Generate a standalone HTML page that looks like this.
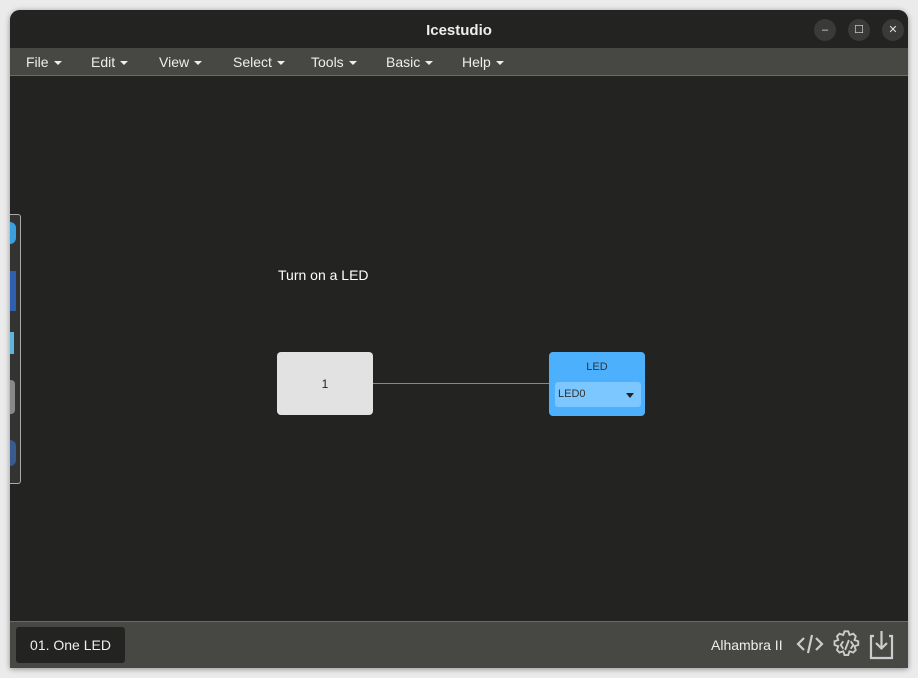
<!DOCTYPE html>
<html><head><meta charset="utf-8"><style>
*{margin:0;padding:0;box-sizing:border-box}
body{width:918px;height:678px;background:#ebebeb;position:relative;overflow:hidden;font-family:"Liberation Sans",sans-serif}
.win{position:absolute;left:10px;top:10px;width:898px;height:658px;background:#232321;border-radius:10px 10px 0 0;overflow:hidden;box-shadow:0 1px 6px rgba(0,0,0,.4)}
.title{height:38px;background:#232321;color:#eee;font-weight:bold;font-size:15px;text-align:center;line-height:42px}
.btn{position:absolute;top:9px;width:22px;height:22px;border-radius:50%;background:#3a3a38;color:#ddd;font-size:11px;text-align:center;line-height:22px}
.menu{position:absolute;top:38px;left:0;right:0;height:28px;background:#474743;border-bottom:1px solid #6a6a66;color:#eee;font-size:14px}
.menu span{position:absolute;top:6px}
.menu span:after{content:"";display:inline-block;margin-left:5px;vertical-align:middle;border-left:4px solid transparent;border-right:4px solid transparent;border-top:4px solid #eee}
.bottom{position:absolute;left:0;right:0;top:611px;height:47px;background:#474743;border-top:1px solid #6a6a66}
</style></head><body>
<div class="win">
<div class="title">Icestudio</div>
<div class="btn" style="left:804px">–</div>
<div class="btn" style="left:838px">☐</div>
<div class="btn" style="left:872px">✕</div>
<div class="menu">
<span style="left:16px">File</span><span style="left:81px">Edit</span><span style="left:149px">View</span><span style="left:223px">Select</span><span style="left:301px">Tools</span><span style="left:376px">Basic</span><span style="left:452px">Help</span>
</div>
<div style="position:absolute;left:-2px;top:204px;width:13px;height:270px;border:1px solid #aaa;border-left:none;border-radius:0 3px 3px 0;background:#333331"></div>
<div style="position:absolute;left:0;top:212px;width:6px;height:22px;background:#3aa0e0;border-radius:0 6px 6px 0"></div>
<div style="position:absolute;left:0;top:261px;width:6px;height:40px;background:#2f5fb0"></div>
<div style="position:absolute;left:0;top:322px;width:4px;height:22px;background:#5ab6e0"></div>
<div style="position:absolute;left:0;top:370px;width:5px;height:34px;background:#888;border-radius:0 4px 4px 0"></div>
<div style="position:absolute;left:0;top:430px;width:6px;height:26px;background:#3a5a90;border-radius:0 8px 8px 0"></div>
<div style="position:absolute;left:268px;top:257px;color:#fff;font-size:14px">Turn on a LED</div>
<div style="position:absolute;left:267px;top:342px;width:96px;height:63px;background:#e2e2e2;border-radius:4px;font-size:12px;color:#222;text-align:center;line-height:64px">1</div>
<div style="position:absolute;left:363px;top:373px;width:176px;height:1px;background:#888"></div>
<div style="position:absolute;left:539px;top:342px;width:96px;height:64px;background:#4db0fc;border-radius:4px;font-size:11px;color:#333">
<div style="text-align:center;margin-top:9px">LED</div>
<div style="position:absolute;left:6px;top:30px;width:86px;height:25px;background:#7cc7ff;border-radius:3px;line-height:25px;padding-left:3px">LED0<span style="position:absolute;right:7px;top:11px;border-left:4px solid transparent;border-right:4px solid transparent;border-top:5px solid #222"></span></div>
</div>
<div class="bottom">
<div style="position:absolute;left:6px;top:5px;width:109px;height:36px;background:#232321;border-radius:3px;color:#eee;font-size:14px;text-align:center;line-height:36px">01. One LED</div>
<div style="position:absolute;left:701px;top:15px;color:#eee;font-size:14px">Alhambra II</div>
<svg style="position:absolute;left:786px;top:6px" width="100" height="34" viewBox="0 0 100 34" fill="none" stroke="#ccc" stroke-width="2.2">
<path d="M8 10 L2 16 L8 22 M20 10 L26 16 L20 22 M16 7 L12 25"/>
<g stroke-width="1.5" transform="translate(51 17) scale(1.25) translate(-51 -14)"><path d="M49 3 l3 0 1 3 3 -1 2 2 -1 3 3 1 0 3 -3 1 1 3 -2 2 -3 -1 -1 3 -3 0 -1 -3 -3 1 -2 -2 1 -3 -3 -1 0 -3 3 -1 -1 -3 2 -2 3 1 z"/><path d="M48 11 l-2 3 2 3 M54 11 l2 3 -2 3 M52.5 10 l-3 8"/></g>
<path d="M78 8 h-3 v22 h21 v-22 h-3 M85.5 3 v17 M80 15 l5.5 5.5 5.5 -5.5"/>
</svg>
</div>
</div>
</body></html>
